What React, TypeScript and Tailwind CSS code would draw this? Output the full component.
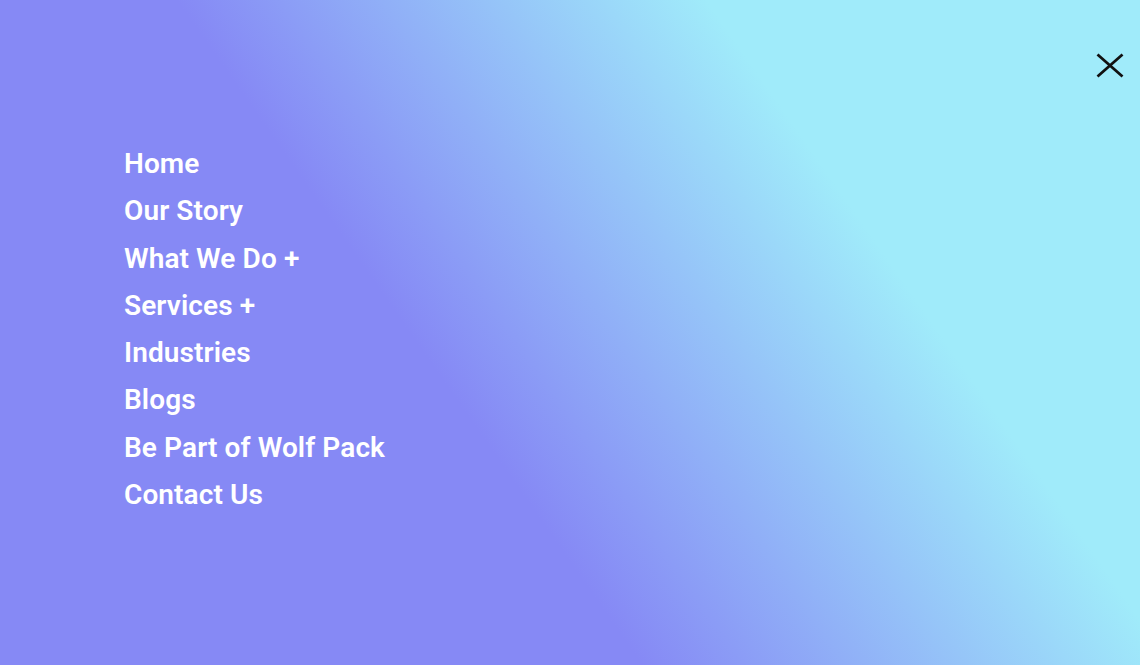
import React from 'react';

const links = [
  'Home',
  'Our Story',
  'What We Do +',
  'Services +',
  'Industries',
  'Blogs',
  'Be Part of Wolf Pack',
  'Contact Us',
];

export default function App() {
  return (
    <div className="w-full h-[665px] overflow-hidden bg-[linear-gradient(55deg,#8689f5_40%,#a0ebfa_73%)] flex flex-col">
      {/* close */}
      <div className="flex justify-end pt-[53px] pr-[16px]">
        <button className="w-[28px] h-[25px] text-[#111]" aria-label="Close menu">
          <svg viewBox="0 0 28 25" className="w-full h-full" fill="none" stroke="currentColor" strokeWidth="2.8">
            <path d="M1.5 1.5L26.5 23.5M26.5 1.5L1.5 23.5" />
          </svg>
        </button>
      </div>

      <nav className="pl-[124px] pt-[62px]">
        <ul className="flex flex-col">
          {links.map((l) => (
            <li key={l}>
              <a href="#" className="block text-white text-[28px] font-semibold leading-[47.3px] tracking-[0.1px] font-['Roboto',sans-serif]">
                {l}
              </a>
            </li>
          ))}
        </ul>
      </nav>
    </div>
  );
}
